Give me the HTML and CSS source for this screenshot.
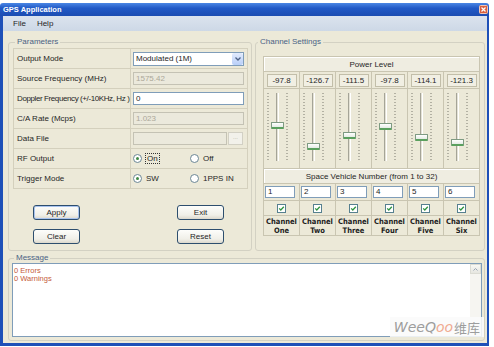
FILE: index.html
```html
<!DOCTYPE html>
<html lang="en">
<head>
    <meta charset="UTF-8">
    <title>GPS Application</title>
    <link rel="stylesheet" href="styles.css">
</head>
<body>
    <div class="window">
        <div class="titlebar">
            <span class="title">GPS Application</span>
            <svg class="close" width="9" height="9" viewBox="0 0 9 9">
                <rect x="0.5" y="0.5" width="8" height="8" rx="1" fill="#d8603f" stroke="#f1c4b3"/>
                <path d="M2.5 2.5 L6.5 6.5 M6.5 2.5 L2.5 6.5" stroke="#fff" stroke-width="1.2"/>
            </svg>
        </div>
        <div class="frame">
            <div class="menubar">
                <span>File</span>
                <span>Help</span>
            </div>
            <div class="client">
                <div class="top">
                    <fieldset class="group params">
                        <legend>Parameters</legend>
                        <table class="param-table">
                            <colgroup>
                                <col class="col-label">
                                <col>
                            </colgroup>
                            <tr>
                                <td class="label">Output Mode</td>
                                <td class="field">
                                    <div class="select">
                                        <span>Modulated (1M)</span>
                                        <span class="select-btn">
                                            <svg width="6" height="4" viewBox="0 0 6 4"><path d="M0.5 0.5 L3 3 L5.5 0.5" fill="none" stroke="#4d6185" stroke-width="1.3"/></svg>
                                        </span>
                                    </div>
                                </td>
                            </tr>
                            <tr>
                                <td class="label">Source Frequency (MHz)</td>
                                <td class="field"><div class="input disabled">1575.42</div></td>
                            </tr>
                            <tr>
                                <td class="label tight">Doppler Frequency (+/-10KHz, Hz )</td>
                                <td class="field"><div class="input">0</div></td>
                            </tr>
                            <tr>
                                <td class="label">C/A Rate (Mcps)</td>
                                <td class="field"><div class="input disabled">1.023</div></td>
                            </tr>
                            <tr>
                                <td class="label">Data File</td>
                                <td class="field">
                                    <div class="file-row">
                                        <div class="input disabled"></div>
                                        <div class="browse">...</div>
                                    </div>
                                </td>
                            </tr>
                            <tr>
                                <td class="label">RF Output</td>
                                <td class="field">
                                    <div class="radios">
                                        <span class="radio-opt"><span class="radio on"></span><span class="focus">On</span></span>
                                        <span class="radio-opt"><span class="radio"></span>Off</span>
                                    </div>
                                </td>
                            </tr>
                            <tr>
                                <td class="label">Trigger Mode</td>
                                <td class="field">
                                    <div class="radios">
                                        <span class="radio-opt"><span class="radio on"></span>SW</span>
                                        <span class="radio-opt"><span class="radio"></span>1PPS IN</span>
                                    </div>
                                </td>
                            </tr>
                        </table>
                        <div class="actions">
                            <button class="btn default">Apply</button>
                            <button class="btn">Exit</button>
                            <button class="btn">Clear</button>
                            <button class="btn">Reset</button>
                        </div>
                    </fieldset>

                    <fieldset class="group channels">
                        <legend>Channel Settings</legend>
                        <div class="ch-grid">
                            <div class="span">Power Level</div>

                            <div class="level"><span>-97.8</span></div>
                            <div class="level"><span>-126.7</span></div>
                            <div class="level"><span>-111.5</span></div>
                            <div class="level"><span>-97.8</span></div>
                            <div class="level"><span>-114.1</span></div>
                            <div class="level"><span>-121.3</span></div>

                            <div class="slider-cell"><div class="slider"><i class="ticks"></i><i class="track"></i><i class="ticks"></i></div><div class="thumb" style="top: 33px"></div></div>
                            <div class="slider-cell"><div class="slider"><i class="ticks"></i><i class="track"></i><i class="ticks"></i></div><div class="thumb" style="top: 54px"></div></div>
                            <div class="slider-cell"><div class="slider"><i class="ticks"></i><i class="track"></i><i class="ticks"></i></div><div class="thumb" style="top: 43px"></div></div>
                            <div class="slider-cell"><div class="slider"><i class="ticks"></i><i class="track"></i><i class="ticks"></i></div><div class="thumb" style="top: 34px"></div></div>
                            <div class="slider-cell"><div class="slider"><i class="ticks"></i><i class="track"></i><i class="ticks"></i></div><div class="thumb" style="top: 45px"></div></div>
                            <div class="slider-cell"><div class="slider"><i class="ticks"></i><i class="track"></i><i class="ticks"></i></div><div class="thumb" style="top: 50px"></div></div>

                            <div class="span">Space Vehicle Number (from 1 to 32)</div>

                            <div class="sv-cell"><div class="sv">1</div></div>
                            <div class="sv-cell"><div class="sv">2</div></div>
                            <div class="sv-cell"><div class="sv">3</div></div>
                            <div class="sv-cell"><div class="sv">4</div></div>
                            <div class="sv-cell"><div class="sv">5</div></div>
                            <div class="sv-cell"><div class="sv">6</div></div>

                            <div class="check-cell"><svg width="9" height="9" viewBox="0 0 9 9"><rect x="0.5" y="0.5" width="8" height="8" fill="#fff" stroke="#56808f"/><path d="M2.2 4.4 L3.8 6 L6.8 2.8" fill="none" stroke="#2f9440" stroke-width="1.3"/></svg></div>
                            <div class="check-cell"><svg width="9" height="9" viewBox="0 0 9 9"><rect x="0.5" y="0.5" width="8" height="8" fill="#fff" stroke="#56808f"/><path d="M2.2 4.4 L3.8 6 L6.8 2.8" fill="none" stroke="#2f9440" stroke-width="1.3"/></svg></div>
                            <div class="check-cell"><svg width="9" height="9" viewBox="0 0 9 9"><rect x="0.5" y="0.5" width="8" height="8" fill="#fff" stroke="#56808f"/><path d="M2.2 4.4 L3.8 6 L6.8 2.8" fill="none" stroke="#2f9440" stroke-width="1.3"/></svg></div>
                            <div class="check-cell"><svg width="9" height="9" viewBox="0 0 9 9"><rect x="0.5" y="0.5" width="8" height="8" fill="#fff" stroke="#56808f"/><path d="M2.2 4.4 L3.8 6 L6.8 2.8" fill="none" stroke="#2f9440" stroke-width="1.3"/></svg></div>
                            <div class="check-cell"><svg width="9" height="9" viewBox="0 0 9 9"><rect x="0.5" y="0.5" width="8" height="8" fill="#fff" stroke="#56808f"/><path d="M2.2 4.4 L3.8 6 L6.8 2.8" fill="none" stroke="#2f9440" stroke-width="1.3"/></svg></div>
                            <div class="check-cell"><svg width="9" height="9" viewBox="0 0 9 9"><rect x="0.5" y="0.5" width="8" height="8" fill="#fff" stroke="#56808f"/><path d="M2.2 4.4 L3.8 6 L6.8 2.8" fill="none" stroke="#2f9440" stroke-width="1.3"/></svg></div>

                            <div class="name-cell"><span>Channel</span><span>One</span></div>
                            <div class="name-cell"><span>Channel</span><span>Two</span></div>
                            <div class="name-cell"><span>Channel</span><span>Three</span></div>
                            <div class="name-cell"><span>Channel</span><span>Four</span></div>
                            <div class="name-cell"><span>Channel</span><span>Five</span></div>
                            <div class="name-cell"><span>Channel</span><span>Six</span></div>
                        </div>
                    </fieldset>
                </div>

                <fieldset class="group message">
                    <legend>Message</legend>
                    <div class="msg-box">
                        <div class="msg-text">
                            <div>0 Errors</div>
                            <div>0 Warnings</div>
                        </div>
                        <div class="scrollbar">
                            <div class="scroll-up">
                                <svg width="5" height="3" viewBox="0 0 5 3"><path d="M0.5 2.5 L2.5 0.5 L4.5 2.5" fill="none" stroke="#9aa4b4" stroke-width="1"/></svg>
                            </div>
                        </div>
                        <div class="watermark"><span>Wee</span><span>Q</span><span class="wm-oo">oo</span><span class="wm-cn">维库</span></div>
                    </div>
                </fieldset>
            </div>
        </div>
    </div>
</body>
</html>
```

FILE: styles.css
```css
body {
    margin: 0;
    background: #fff;
    font-family: "Liberation Sans", Arial, sans-serif;
    font-size: 8px;
    color: #262626;
}

.window {
    width: 489px;
    margin-top: 3px;
}

.titlebar {
    height: 13px;
    display: flex;
    align-items: center;
    justify-content: space-between;
    padding: 0 1px 0 3px;
    background: linear-gradient(#4a86e4, #2159c6 40%, #1b4cb2);
    border-radius: 3px 3px 0 0;
    color: #fff;
    font-weight: bold;
    font-size: 7.5px;
}

.close {
    display: block;
}

.frame {
    border: solid #1e50b8;
    border-width: 0 2px 3px 3px;
}

.menubar {
    height: 15px;
    display: flex;
    align-items: center;
    gap: 11px;
    padding-left: 10px;
    background: linear-gradient(#dbe3ee, #cdd8e6);
}

.client {
    height: 312px;
    box-sizing: border-box;
    padding: 6px 2px 2px 5px;
    background: #ece9d8;
    display: flex;
    flex-direction: column;
    gap: 2px;
}

.top {
    display: flex;
    gap: 3px;
    height: 215px;
}

/* group boxes */
.group {
    margin: 0;
    min-width: 0;
    box-sizing: border-box;
    border: 1px solid #d3d1c3;
    border-radius: 3px;
}

.group legend {
    padding: 0 2px;
    margin-left: 2px;
    line-height: 10px;
    color: #4a6284;
}

.params {
    width: 244px;
    padding: 1px 3px 0 4px;
}

.channels {
    width: 230px;
    padding: 9px 5px 0 7px;
}

.channels legend {
    margin-left: -5px;
}

.message {
    padding: 0 2px 3px 3px;
}

/* parameters */
.param-table {
    width: 235px;
    table-layout: fixed;
    border-collapse: collapse;
}

.col-label {
    width: 117px;
}

.param-table td {
    border: 1px solid #d4d0bd;
    height: 19px;
    padding: 0;
    white-space: nowrap;
    overflow: hidden;
}

.param-table .label {
    padding-left: 3px;
}

.param-table .label.tight {
    letter-spacing: -0.4px;
}

.param-table .field {
    padding-left: 2px;
}

.select {
    width: 111px;
    height: 14px;
    box-sizing: border-box;
    border: 1px solid #7f9db9;
    background: #fff;
    display: flex;
    align-items: center;
    justify-content: space-between;
    padding-left: 2px;
}

.select-btn {
    width: 11px;
    height: 12px;
    border-radius: 2px;
    background: linear-gradient(#e2ebfd, #b9cff8);
    display: flex;
    align-items: center;
    justify-content: center;
}

.select-btn svg {
    display: block;
}

.input {
    width: 111px;
    height: 13px;
    box-sizing: border-box;
    border: 1px solid #7f9db9;
    background: #fff;
    padding-left: 2px;
    line-height: 11px;
}

.input.disabled {
    background: #ebe9dc;
    border-color: #c4c2b4;
    color: #aca899;
}

.file-row {
    display: flex;
    gap: 1px;
}

.file-row .input {
    width: 94px;
}

.browse {
    width: 15px;
    height: 13px;
    box-sizing: border-box;
    border: 1px solid #d2d0c4;
    background: #f2f1ea;
    color: #b0ae9f;
    font-size: 6px;
    line-height: 9px;
    text-align: center;
}

.radios {
    display: flex;
    align-items: center;
}

.radio-opt {
    display: flex;
    align-items: center;
    gap: 4px;
    width: 57px;
}

.radio {
    width: 9px;
    height: 9px;
    box-sizing: border-box;
    border: 1px solid #6b8694;
    border-radius: 50%;
    background: #fff;
    display: flex;
    align-items: center;
    justify-content: center;
}

.radio.on::after {
    content: "";
    width: 3px;
    height: 3px;
    border-radius: 50%;
    background: #3f8a45;
}

.focus {
    outline: 1px dotted #333;
    padding: 0 1px;
}

.actions {
    display: grid;
    grid-template-columns: 47px 47px;
    column-gap: 97px;
    row-gap: 9px;
    padding-left: 20px;
    margin-top: 16px;
}

.btn {
    width: 47px;
    height: 15px;
    padding: 0;
    border: 1px solid #2d4e6e;
    border-radius: 3px;
    background: linear-gradient(#fdfdfb, #f0efe8 70%, #dcd8cc);
    font-family: inherit;
    font-size: 8px;
    color: #262626;
}

.btn.default {
    box-shadow: inset 0 0 0 1px #a9c3ee;
}

/* channel settings */
.ch-grid {
    display: grid;
    grid-template-columns: repeat(6, 36px);
    grid-template-rows: 15px 17px 80px 15px 17px 15px 20px;
    border-top: 1px solid #c9c5b1;
    border-left: 1px solid #c9c5b1;
    width: 216px;
}

.ch-grid > div {
    box-sizing: border-box;
    border-right: 1px solid #c9c5b1;
    border-bottom: 1px solid #c9c5b1;
}

.ch-grid .span {
    grid-column: 1 / -1;
    display: flex;
    align-items: center;
    justify-content: center;
    background: #efede1;
    box-shadow: inset 1px 1px 0 #fff;
}

.level {
    display: flex;
    align-items: center;
    justify-content: center;
}

.level span {
    width: 30px;
    height: 13px;
    box-sizing: border-box;
    border: 1px solid #c2bea9;
    background: #f1efe3;
    display: flex;
    align-items: center;
    justify-content: center;
}

.slider-cell {
    position: relative;
    padding: 4px 0 0 3px;
}

.slider {
    width: 21px;
    height: 68px;
    display: flex;
    justify-content: space-between;
}

.ticks {
    width: 2px;
    background: repeating-linear-gradient(#b3b1a3 0 1px, transparent 1px 3px);
}

.track {
    width: 3px;
    box-sizing: border-box;
    border-left: 1px solid #a5a497;
    border-right: 1px solid #fff;
    background: #e4e2d6;
}

.thumb {
    position: absolute;
    left: 7px;
    width: 13px;
    height: 7px;
    box-sizing: border-box;
    border: 1px solid #7e9a82;
    border-bottom: 2px solid #5aa05e;
    border-radius: 1px;
    background: linear-gradient(#fff, #e4ebe4);
}

.sv-cell {
    display: flex;
    align-items: center;
    padding-left: 1px;
}

.sv {
    width: 30px;
    height: 12px;
    box-sizing: border-box;
    border: 1px solid #7f9db9;
    background: #fff;
    padding-left: 2px;
    line-height: 10px;
}

.check-cell {
    display: flex;
    align-items: center;
    justify-content: center;
}

.check-cell svg {
    display: block;
}

.name-cell {
    display: flex;
    flex-direction: column;
    align-items: center;
    justify-content: center;
    font-family: "Liberation Sans Narrow", "DejaVu Sans Condensed", sans-serif;
    font-weight: bold;
    font-size: 7.5px;
    line-height: 9px;
    color: #222;
}

/* message box */
.msg-box {
    position: relative;
    height: 72px;
    display: flex;
    border: 1px solid #7f9db9;
    background: #fff;
}

.msg-text {
    flex: 1;
    padding: 3px 1px;
    color: #c45a3a;
    font-size: 7.5px;
    line-height: 8px;
}

.scrollbar {
    width: 11px;
    background: #f6f5f1;
}

.scroll-up {
    height: 10px;
    box-sizing: border-box;
    border: 1px solid #dcdcd4;
    background: linear-gradient(#f8f8f4, #e6e6e0);
    display: flex;
    align-items: center;
    justify-content: center;
}

.scroll-up svg {
    display: block;
}

.watermark {
    position: absolute;
    right: -3px;
    bottom: -1px;
    width: 94px;
    height: 20px;
    display: flex;
    align-items: center;
    justify-content: center;
    background: rgba(250, 250, 250, 0.88);
    color: #9d9d9d;
    font-family: "DejaVu Sans", sans-serif;
    font-style: italic;
    font-size: 14px;
}

.wm-oo {
    color: #f0aa90;
}

.wm-cn {
    font-family: "Noto Sans CJK SC", sans-serif;
    font-style: normal;
    font-size: 13px;
    margin-left: 1px;
}
```
